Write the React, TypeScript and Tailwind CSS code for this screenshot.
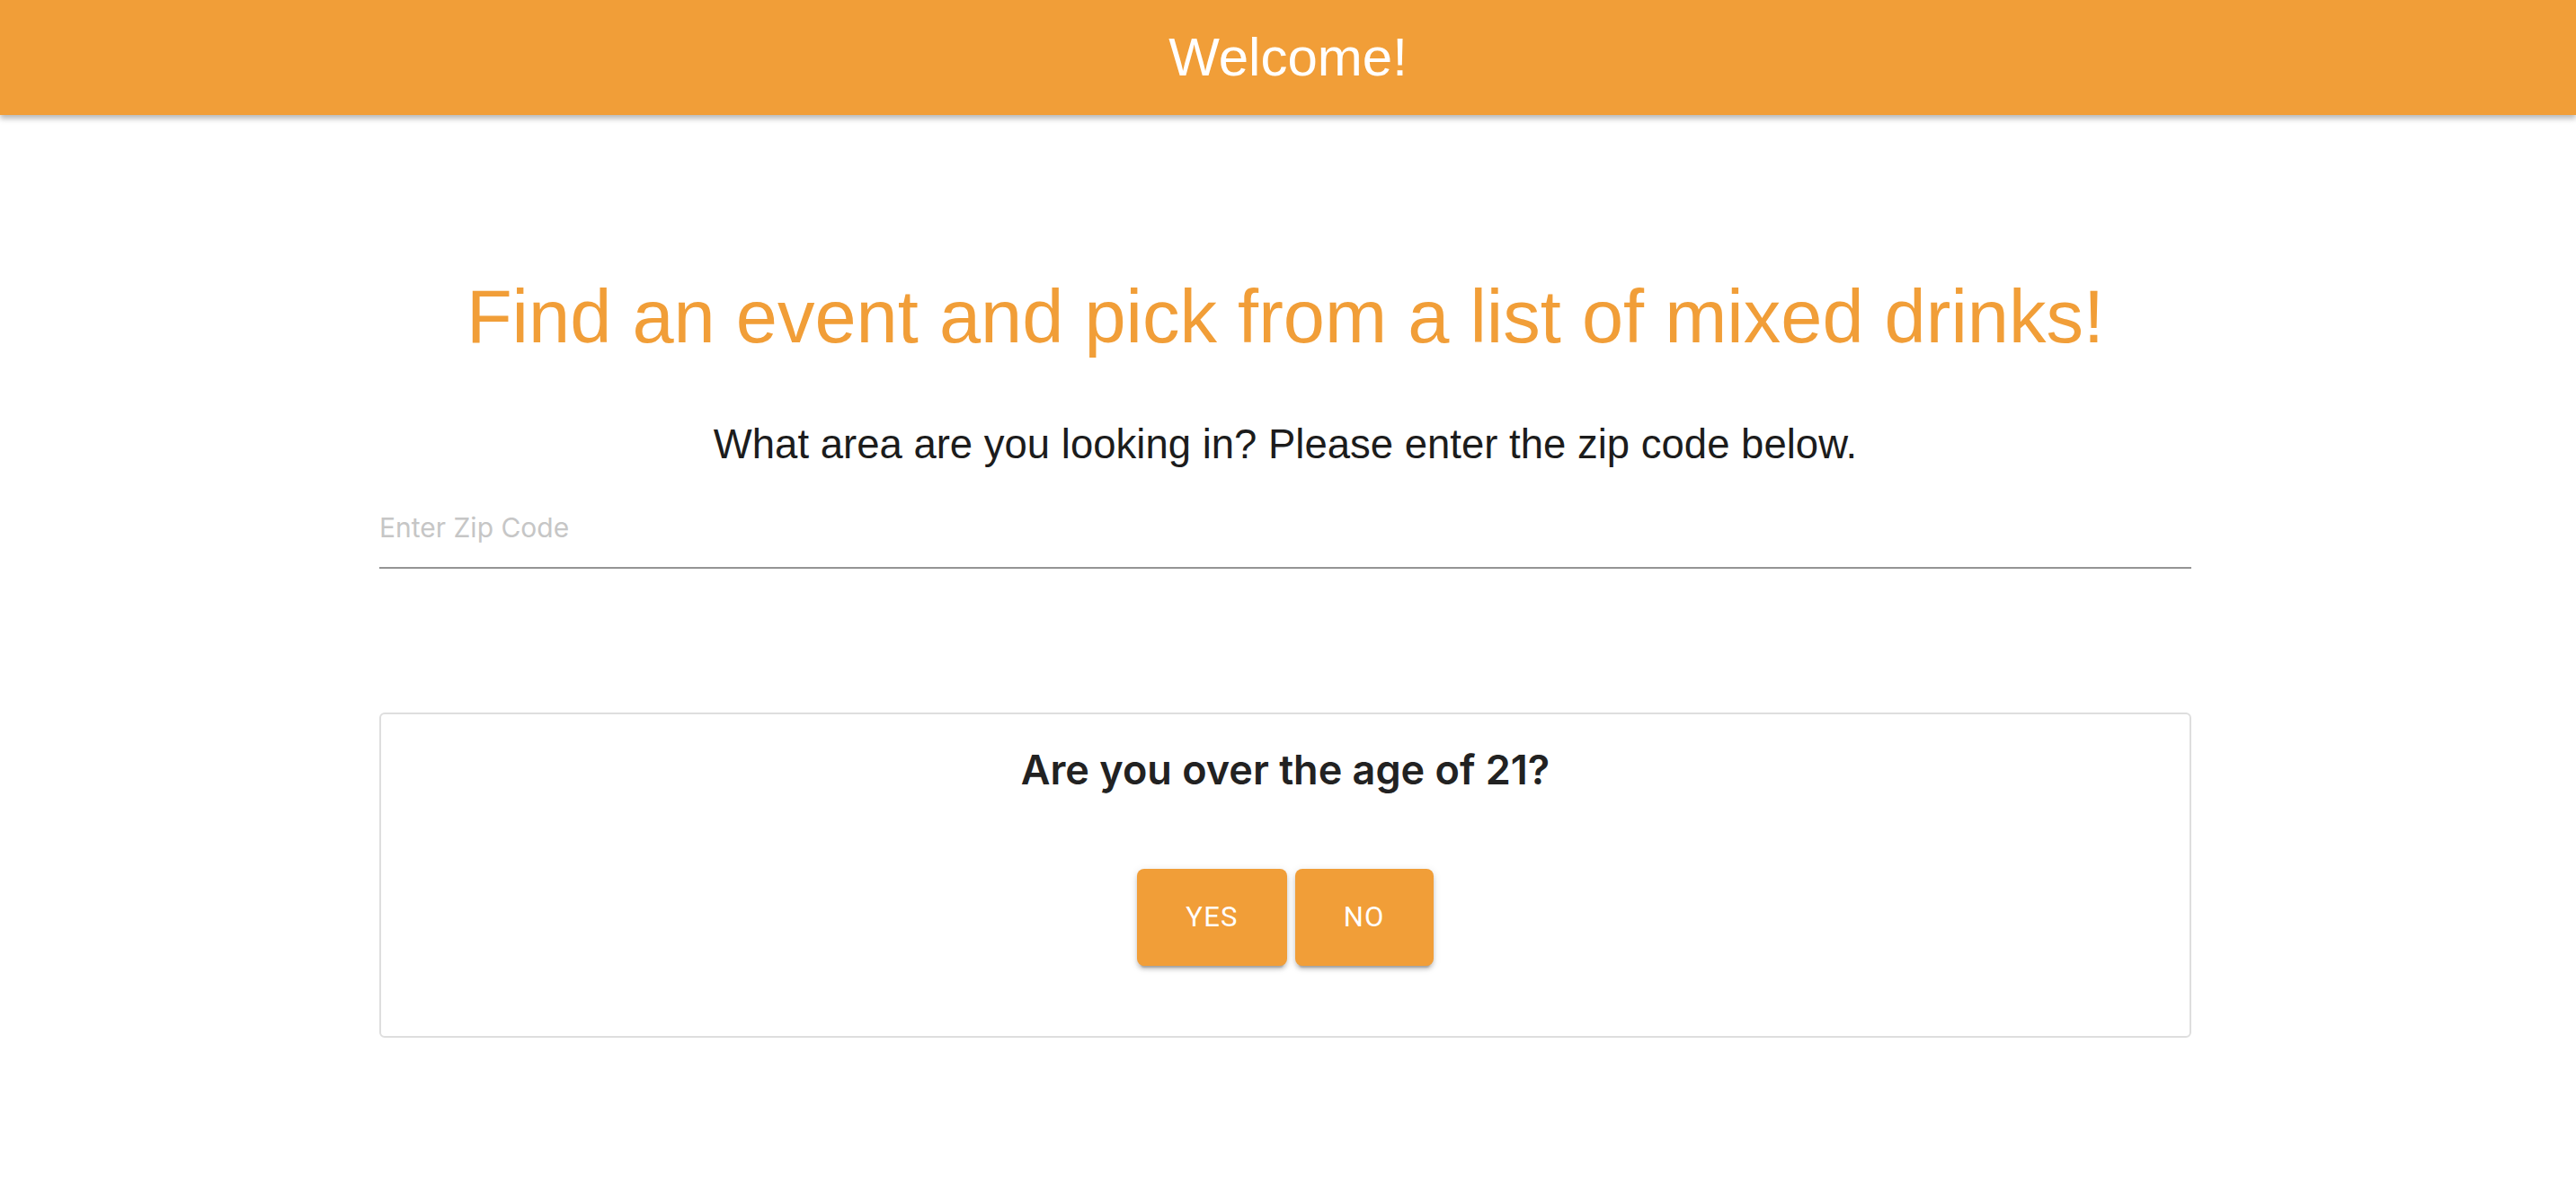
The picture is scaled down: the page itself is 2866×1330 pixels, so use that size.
import { useState } from "react";

const orange = "bg-[#f19e38]";

function AgeButton({ label }: { label: string }) {
  return (
    <button
      type="button"
      className={`${orange} h-[108px] px-[54px] rounded-[8px] text-white text-[31px] font-normal uppercase tracking-[0.04em] font-['Roboto',sans-serif] shadow-[0_6px_2px_-4px_rgba(0,0,0,0.2),0_4px_4px_0_rgba(0,0,0,0.14),0_2px_10px_0_rgba(0,0,0,0.12)]`}
    >
      {label}
    </button>
  );
}

export default function App() {
  const [zip, setZip] = useState("");

  return (
    <div className="min-h-screen bg-white font-['Liberation_Sans',Arial,sans-serif]">
      <header
        className={`${orange} relative z-10 h-[128px] flex items-center justify-center shadow-[0_4px_6px_rgba(0,0,0,0.28)]`}
      >
        <h1 className="text-white text-[60px] leading-none">Welcome!</h1>
      </header>

      <div className="flex justify-center pr-[6px]">
        <main className="w-[2016px] pt-[175px]">
          <h2 className="text-center text-[#f19e38] text-[83px] leading-[100px]">
            Find an event and pick from a list of mixed drinks!
          </h2>
          <p className="mt-[62px] text-center text-[#1c1c1c] text-[45.5px] leading-[60px]">
            What area are you looking in? Please enter the zip code below.
          </p>

          <div className="mt-[30px] border-b-2 border-[#949494]">
            <input
              type="text"
              value={zip}
              onChange={(e) => setZip(e.target.value)}
              placeholder="Enter Zip Code"
              className="block w-full h-[76px] pb-[12px] bg-transparent outline-none text-[30px] text-[#222] placeholder:text-[#c6c6c6] font-['Inter',sans-serif]"
            />
          </div>

          <section className="mt-[160px] border-2 border-[#dedede] rounded-[6px] pt-[34px] pb-[78px] flex flex-col items-center">
            <h3 className="text-[#222] text-[45px] leading-[56px] font-semibold font-['Inter',sans-serif]">
              Are you over the age of 21?
            </h3>
            <div className="mt-[82px] flex gap-[9px]">
              <AgeButton label="Yes" />
              <AgeButton label="No" />
            </div>
          </section>
        </main>
      </div>
    </div>
  );
}
